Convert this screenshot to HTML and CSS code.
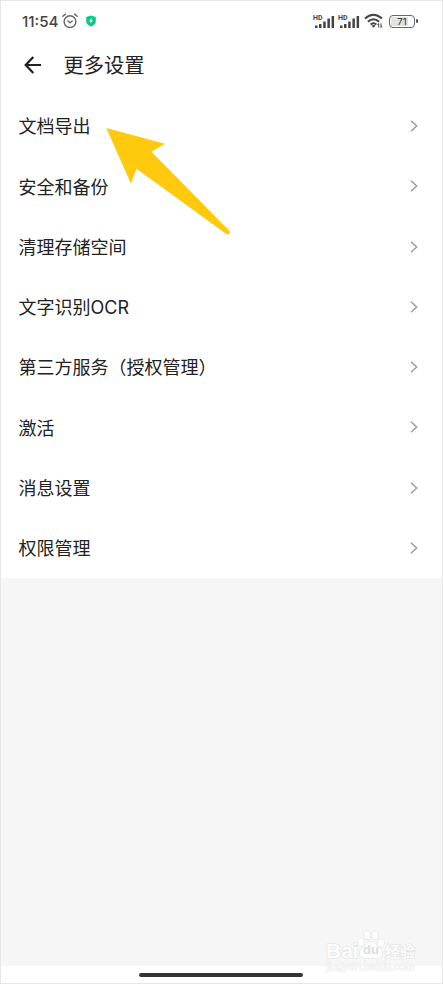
FILE: index.html
```html
<!DOCTYPE html>
<html lang="zh-CN">
<head>
<meta charset="utf-8">
<title>更多设置</title>
<link rel="stylesheet" href="styles.css">
</head>
<body>
<div class="phone">
  <div class="status">
    <span class="time">11:54</span>
    <svg class="alarm" width="16" height="16" viewBox="0 0 16 16" fill="none" stroke="#666" stroke-width="1.4" stroke-linecap="round" stroke-linejoin="round"><circle cx="8" cy="8.6" r="5.9"/><path d="M5.9 8 8 9.8 10.2 8M.9 3.3 3.4 1.1M15.1 3.3 12.6 1.1"/></svg>
    <svg class="shield" width="10" height="12" viewBox="0 0 10 12"><path d="M5 .4 9.8 2v4.5C9.8 9 7.500 10.600 5 11.600 2.500 10.600.2 9 .2 6.500V2Z" fill="#0bc98d"/><path d="M5.600 2.900 3 6.300h1.700L4.300 8.600 7 5.300H5.300Z" fill="#fff"/></svg>
    <span class="spacer"></span>
    <span class="signal"><small>HD</small><svg width="21" height="13" viewBox="0 0 21 13" fill="#444"><path d="M1 10.500h2.500V13H1zM5 9h2.500v4H5zM9.200 6.500h2.500V13H9.200zM13.400 3.500h2.500V13h-2.500zM17.600 1h2.500v12h-2.500z"/></svg></span>
    <span class="signal"><small>HD</small><svg width="21" height="13" viewBox="0 0 21 13" fill="#444"><path d="M1 10.500h2.500V13H1zM5 9h2.500v4H5zM9.200 6.500h2.500V13H9.200zM13.400 3.500h2.500V13h-2.500zM17.600 1h2.500v12h-2.500z"/></svg></span>
    <svg class="wifi" width="20" height="16" viewBox="0 0 20 16" fill="none" stroke="#444" stroke-width="2"><path d="M1 5.600Q9.500-2 18 5.600M3.900 8.700Q9.500 3.700 15.100 8.700M6.600 11.600Q9.500 9 12.400 11.600"/><path d="M7.500 12.700Q9.500 11.400 11.500 12.700L9.500 14.800Z" fill="#444" stroke="none"/><path d="M14.700 14.500v-4l-1.200 1.500M17 10.500v4l1.300-1.500" stroke-width="1"/></svg>
    <span class="battery"><span class="level" style="width:71%"></span><b>71</b></span><span class="tip"></span>
  </div>
  <header class="header">
    <svg width="18" height="18" viewBox="0 0 18 18" fill="none" stroke="#202020" stroke-width="2.200"><path d="M17 9H2M9.300 1 1.700 9l7.600 8"/></svg>
    <h1>更多设置</h1>
  </header>
  <main class="list">
    <div class="row"><span>文档导出</span><svg class="chevron" viewBox="0 0 8 12"><path d="M1 .7 6.700 6 1 11.300"/></svg></div>
    <div class="row"><span>安全和备份</span><svg class="chevron" viewBox="0 0 8 12"><path d="M1 .7 6.700 6 1 11.300"/></svg></div>
    <div class="row"><span>清理存储空间</span><svg class="chevron" viewBox="0 0 8 12"><path d="M1 .7 6.700 6 1 11.300"/></svg></div>
    <div class="row"><span>文字识别<span class="latin">OCR</span></span><svg class="chevron" viewBox="0 0 8 12"><path d="M1 .7 6.700 6 1 11.300"/></svg></div>
    <div class="row"><span>第三方服务（授权管理）</span><svg class="chevron" viewBox="0 0 8 12"><path d="M1 .7 6.700 6 1 11.300"/></svg></div>
    <div class="row"><span>激活</span><svg class="chevron" viewBox="0 0 8 12"><path d="M1 .7 6.700 6 1 11.300"/></svg></div>
    <div class="row"><span>消息设置</span><svg class="chevron" viewBox="0 0 8 12"><path d="M1 .7 6.700 6 1 11.300"/></svg></div>
    <div class="row"><span>权限管理</span><svg class="chevron" viewBox="0 0 8 12"><path d="M1 .7 6.700 6 1 11.300"/></svg></div>
  </main>
  <div class="empty"></div>
  <footer class="nav"><span class="handle"></span></footer>
  <svg class="pointer" width="126" height="108" viewBox="0 0 126 108"><path d="M.3 0 59 15.800 45.500 23.700 124 103.500Q124.500 106.500 121 106.500L30.500 40.800 25 55.800Z" fill="#ffc90e"/></svg>
  <div class="watermark">
    <div class="brand">
      <span class="bai">Bai</span>
      <span class="paw"><svg width="28" height="29" viewBox="0 0 28 29"><g fill="#fcfcfc" stroke="#dedede"><ellipse cx="4" cy="12" rx="3" ry="4"/><ellipse cx="10" cy="5" rx="3.300" ry="4.300"/><ellipse cx="18" cy="5.300" rx="3.300" ry="4.300"/><ellipse cx="24" cy="13" rx="3.200" ry="4"/><path d="M14 11.500C10 11.500 8.500 16 5 18.500 1.500 21 1.500 28 8 28H20C26.500 28 26.500 21 23 18.500 19.500 16 18 11.500 14 11.500Z"/></g></svg><em>du</em></span>
      <span class="jy">经验</span>
    </div>
    <div class="site">jingyan.baidu.com</div>
  </div>
</div>
</body>
</html>
```
FILE: styles.css
```css
* { box-sizing: border-box; }
body { margin: 0; font-family: "Noto Sans CJK SC", sans-serif; color: #222; }
.phone { position: relative; display: flex; flex-direction: column; width: 443px; height: 984px; border: 1px solid #e6e6e6; background: #fff; overflow: hidden; }
.status { display: flex; align-items: center; height: 40px; padding: 0 24px 0 21px; font-family: Inter, sans-serif; color: #444; }
.time { width: 38px; padding-top: 1px; font-size: 15.2px; line-height: 20px; font-weight: 500; white-space: nowrap; }
.alarm { margin-left: 2px; }
.shield { margin-left: 8px; }
.spacer { flex: 1; }
.signal { position: relative; display: flex; width: 21px; margin-right: 4px; }
.signal small { position: absolute; left: -1px; top: 0; font: 700 7px/7px Roboto, sans-serif; }
.wifi { margin-right: 5px; }
.battery { position: relative; display: flex; justify-content: center; align-items: center; width: 26px; height: 13px; border: 1.5px solid #666; border-radius: 4px; overflow: hidden; }
.level { position: absolute; left: 1px; top: 1px; bottom: 1px; background: #e2e2e2; }
.battery b { position: relative; font-size: 9.5px; line-height: 11px; font-weight: 500; }
.tip { width: 2px; height: 4px; margin-left: 1px; border-radius: 1px; background: #555; }
.header { display: flex; align-items: center; gap: 21.5px; height: 55px; padding: 0 23px 7px; }
.header h1 { margin: 0; padding-bottom: 3px; font-size: 20.3px; line-height: 30px; font-weight: 400; }
.list { display: grid; grid-template-rows: repeat(8, 60.25px); height: 482px; }
.row { display: flex; align-items: center; justify-content: space-between; padding: 0 24px 0 17.5px; font-size: 18px; line-height: 26px; }
.row > span { padding-bottom: 1.5px; }
.latin { font-family: Inter, sans-serif; font-size: 18px; line-height: 1; }
.chevron { width: 8px; height: 12px; fill: none; stroke: #999; stroke-width: 1.4; }
.empty { flex: 1; background: #f6f6f6; }
.nav { display: flex; justify-content: center; align-items: center; height: 17px; }
.handle { width: 164px; height: 4px; margin-right: 1px; border-radius: 2px; background: #333; }
.pointer { position: absolute; left: 105px; top: 127px; }
.watermark { position: absolute; left: 325px; top: 929px; width: 92px; color: #fcfcfc; font-family: "Liberation Sans", sans-serif; -webkit-text-stroke: 1.2px #e2e2e2; paint-order: stroke fill; }
.brand { display: flex; height: 30px; }
.bai { width: 31px; font-size: 21px; line-height: 42px; font-weight: 700; }
.paw { position: relative; width: 28px; height: 29px; }
.paw em { position: absolute; left: 6px; top: 13px; color: #dedede; -webkit-text-stroke: 0; font-size: 13px; line-height: 14px; font-style: normal; font-weight: 700; }
.jy { font: 700 15px/41px "Noto Sans CJK SC", sans-serif; }
.site { font-size: 11px; line-height: 12px; -webkit-text-stroke: .8px #e6e6e6; }
```
